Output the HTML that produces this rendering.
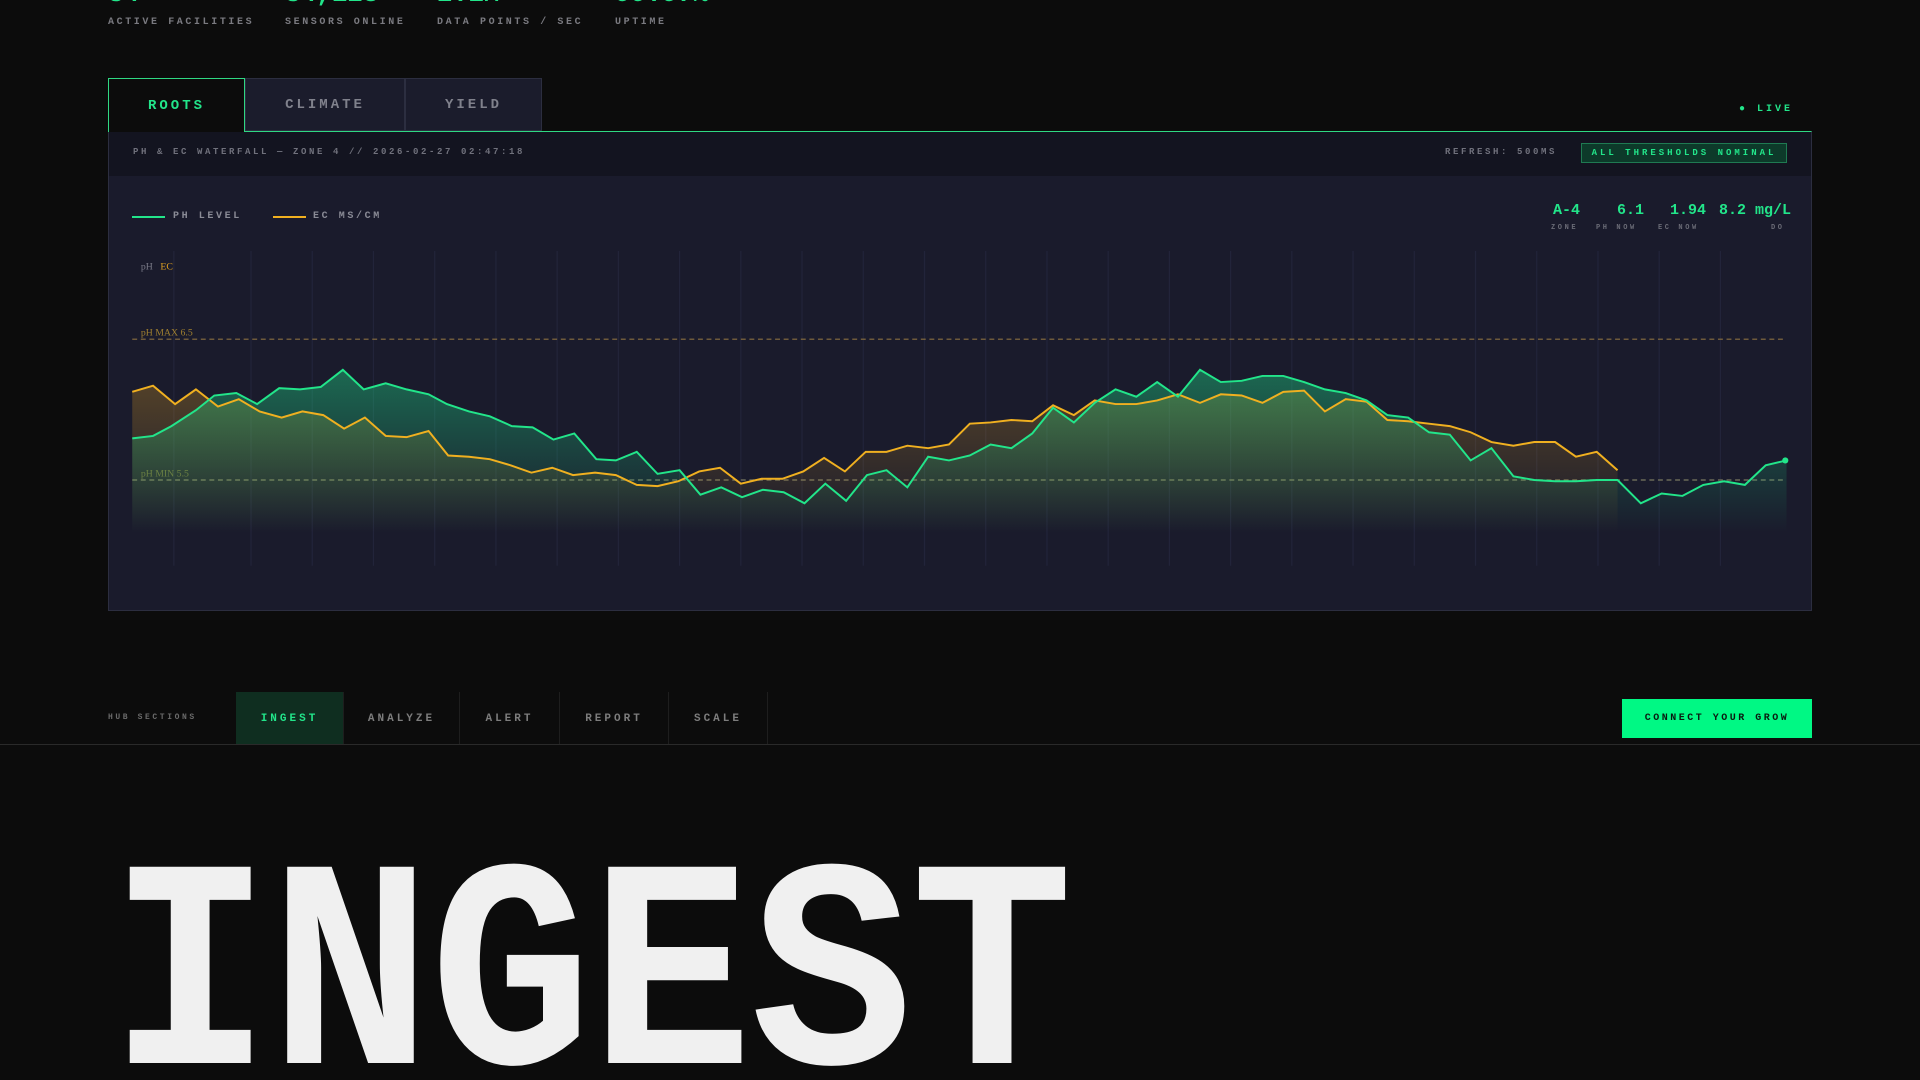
<!DOCTYPE html>
<html><head><meta charset="utf-8"><style>
*{margin:0;padding:0;box-sizing:border-box}
html,body{width:1920px;height:1080px;overflow:hidden}
body{background:#0c0c0c;position:relative;font-family:"Liberation Mono",monospace;}
.a{position:absolute;white-space:nowrap}
.lbl{font-size:10px;letter-spacing:2.6px;color:#7a7a80;font-weight:bold}
.num{font-size:26px;color:#22e58a;font-weight:bold}
.tab{position:absolute;top:78px;height:53px;border:1px solid #2c2e40;background:#1b1c2c;color:#80818c;font-size:14px;font-weight:bold;letter-spacing:3px;display:flex;align-items:center;justify-content:center}
.nav{position:absolute;top:692px;height:53px;display:flex;align-items:center;justify-content:center;font-size:11px;letter-spacing:3px;color:#7d7d7d;font-weight:bold;border-right:1px solid #1e1e1e}
</style></head><body>
<div class="a num" style="left:108px;top:-21px">34</div>
<div class="a num" style="left:285px;top:-21px">34,128</div>
<div class="a num" style="left:437px;top:-21px">2.1M</div>
<div class="a num" style="left:615px;top:-21px">99.97%</div>
<div class="a lbl" style="left:108px;top:17px">ACTIVE FACILITIES</div>
<div class="a lbl" style="left:285px;top:17px">SENSORS ONLINE</div>
<div class="a lbl" style="left:437px;top:17px">DATA POINTS / SEC</div>
<div class="a lbl" style="left:615px;top:17px">UPTIME</div>

<div class="tab" style="left:108px;width:137px;background:#0c0c0c;border-color:#2fd883;border-bottom:none;color:#22e58a;height:54px;z-index:2">ROOTS</div>
<div class="tab" style="left:245px;width:160px">CLIMATE</div>
<div class="tab" style="left:405px;width:137px">YIELD</div>
<div class="a" style="left:1739px;top:104px;font-size:10px;letter-spacing:3px;color:#22e58a;font-weight:bold">● LIVE</div>

<div class="a" style="left:108px;top:131px;width:1704px;height:480px;background:#1a1b2c;border:1px solid #2c2e40;border-top:1px solid #2fd883"></div>
<div class="a" style="left:109px;top:132px;width:1702px;height:44px;background:#131420"></div>
<div class="a lbl" style="left:133px;top:147px;font-size:9px;color:#70717c">PH &amp; EC WATERFALL — ZONE 4 // 2026-02-27 02:47:18</div>
<div class="a lbl" style="left:1445px;top:147px;font-size:9px;color:#70717c">REFRESH: 500MS</div>
<div class="a" style="left:1581px;top:143px;width:206px;height:20px;background:#0d3a2a;border:1px solid #1f7a52;color:#22e58a;font-size:9px;letter-spacing:3px;font-weight:bold;display:flex;align-items:center;justify-content:center">ALL THRESHOLDS NOMINAL</div>

<div class="a" style="left:132px;top:216px;width:33px;height:2px;background:#22e58a"></div>
<div class="a lbl" style="left:173px;top:211px;color:#8a8b96">PH LEVEL</div>
<div class="a" style="left:273px;top:216px;width:33px;height:2px;background:#f0b020"></div>
<div class="a lbl" style="left:313px;top:211px;color:#8a8b96">EC MS/CM</div>

<div class="a" style="left:1553px;top:202px;font-size:15px;font-weight:bold;color:#22e58a">A-4</div>
<div class="a" style="left:1617px;top:202px;font-size:15px;font-weight:bold;color:#22e58a">6.1</div>
<div class="a" style="left:1670px;top:202px;font-size:15px;font-weight:bold;color:#22e58a">1.94</div>
<div class="a" style="left:1719px;top:202px;font-size:15px;font-weight:bold;color:#22e58a">8.2 mg/L</div>
<div class="a lbl" style="left:1551px;top:224px;font-size:7px;color:#6a6b76">ZONE</div>
<div class="a lbl" style="left:1596px;top:224px;font-size:7px;color:#6a6b76">PH NOW</div>
<div class="a lbl" style="left:1658px;top:224px;font-size:7px;color:#6a6b76">EC NOW</div>
<div class="a lbl" style="left:1771px;top:224px;font-size:7px;color:#6a6b76">DO</div>

<svg class="a" style="left:0;top:0" width="1920" height="1080" viewBox="0 0 1568 882">
<defs>
<linearGradient id="gg" gradientUnits="userSpaceOnUse" x1="0" y1="300" x2="0" y2="435"><stop offset="0" stop-color="#1ee08a" stop-opacity=".4"/><stop offset="1" stop-color="#1ee08a" stop-opacity="0"/></linearGradient>
<linearGradient id="yg" gradientUnits="userSpaceOnUse" x1="0" y1="315" x2="0" y2="435"><stop offset="0" stop-color="#e0a020" stop-opacity=".28"/><stop offset="1" stop-color="#e0a020" stop-opacity="0"/></linearGradient>
</defs>
<g stroke="#22243a" stroke-width="1">
<path d="M142 205V462M205 205V462M255 205V462M305 205V462M355 205V462M405 205V462M455 205V462M505 205V462M555 205V462M605 205V462M655 205V462M705 205V462M755 205V462M805 205V462M855 205V462M905 205V462M955 205V462M1005 205V462M1055 205V462M1105 205V462M1155 205V462M1205 205V462M1255 205V462M1305 205V462M1355 205V462M1405 205V462"/>
</g>
<text x="115" y="220" font-family="Liberation Serif" font-size="8" fill="#7a7a88">pH</text>
<text x="131" y="220" font-family="Liberation Serif" font-size="8" fill="#e0a020">EC</text>
<text x="115" y="274" font-family="Liberation Serif" font-size="8" fill="#a08030">pH MAX 6.5</text>
<text x="115" y="389" font-family="Liberation Serif" font-size="8" fill="#6a6a3a">pH MIN 5.5</text>
<path d="M108 277H1459" stroke="#8a7040" stroke-dasharray="4 3" stroke-width="1"/>
<path d="M108 392H1459" stroke="#6a6a58" stroke-dasharray="4 3" stroke-width="1.2"/>
<path fill="url(#yg)" d="M108,320L125,315L143,330L160,318L178,332L195,326L212,336L230,341L247,336L264,339L281,350L298,341L315,356L332,357L350,352L366,372L383,373L400,375L417,380L434,386L451,382L468,388L486,386L503,388L520,396L537,397L554,393L571,385L588,382L605,395L622,391L639,391L656,385L673,374L690,385L707,369L724,369L741,364L758,366L775,363L792,346L809,345L826,343L843,344L860,331L877,339L894,327L911,330L928,330L945,327L962,322L980,329L997,322L1014,323L1031,329L1048,320L1065,319L1082,336L1099,326L1116,328L1133,343L1150,344L1167,346L1184,348L1201,353L1218,361L1236,364L1253,361L1270,361L1287,373L1304,369L1321,384L1321,435L108,435Z"/>
<path fill="url(#gg)" d="M108,358L125,356L140,348L160,335L175,323L193,321L210,330L228,317L245,318L262,316L280,302L297,318L315,313L332,318L350,322L365,330L383,336L400,340L418,348L435,349L452,359L469,354L487,375L503,376L520,369L537,387L555,384L572,404L589,398L606,406L623,400L640,402L657,411L674,395L691,409L708,388L724,384L741,398L758,373L775,376L792,372L809,363L826,366L843,354L860,333L877,345L894,329L911,318L928,324L945,312L962,324L980,302L997,312L1014,311L1031,307L1048,307L1065,312L1082,318L1099,321L1116,327L1133,339L1150,341L1167,353L1184,355L1201,376L1218,366L1236,389L1253,392L1270,393L1287,393L1304,392L1321,392L1340,411L1357,403L1374,405L1391,396L1408,393L1425,396L1442,380L1459,376L1459,435L108,435Z"/>
<path fill="none" stroke="#f0b020" stroke-width="1.6" d="M108,320L125,315L143,330L160,318L178,332L195,326L212,336L230,341L247,336L264,339L281,350L298,341L315,356L332,357L350,352L366,372L383,373L400,375L417,380L434,386L451,382L468,388L486,386L503,388L520,396L537,397L554,393L571,385L588,382L605,395L622,391L639,391L656,385L673,374L690,385L707,369L724,369L741,364L758,366L775,363L792,346L809,345L826,343L843,344L860,331L877,339L894,327L911,330L928,330L945,327L962,322L980,329L997,322L1014,323L1031,329L1048,320L1065,319L1082,336L1099,326L1116,328L1133,343L1150,344L1167,346L1184,348L1201,353L1218,361L1236,364L1253,361L1270,361L1287,373L1304,369L1321,384"/>
<path fill="none" stroke="#22e58a" stroke-width="1.6" d="M108,358L125,356L140,348L160,335L175,323L193,321L210,330L228,317L245,318L262,316L280,302L297,318L315,313L332,318L350,322L365,330L383,336L400,340L418,348L435,349L452,359L469,354L487,375L503,376L520,369L537,387L555,384L572,404L589,398L606,406L623,400L640,402L657,411L674,395L691,409L708,388L724,384L741,398L758,373L775,376L792,372L809,363L826,366L843,354L860,333L877,345L894,329L911,318L928,324L945,312L962,324L980,302L997,312L1014,311L1031,307L1048,307L1065,312L1082,318L1099,321L1116,327L1133,339L1150,341L1167,353L1184,355L1201,376L1218,366L1236,389L1253,392L1270,393L1287,393L1304,392L1321,392L1340,411L1357,403L1374,405L1391,396L1408,393L1425,396L1442,380L1459,376"/>
<circle cx="1458" cy="376" r="2.5" fill="#22e58a"/>
</svg>

<div class="a lbl" style="left:108px;top:713px;font-size:8px;color:#6a6a6a">HUB SECTIONS</div>
<div class="nav" style="left:236px;width:108px;background:#0f2e20;color:#22e58a">INGEST</div>
<div class="nav" style="left:344px;width:116px">ANALYZE</div>
<div class="nav" style="left:460px;width:100px">ALERT</div>
<div class="nav" style="left:560px;width:109px">REPORT</div>
<div class="nav" style="left:669px;width:99px">SCALE</div>
<div class="a" style="left:1622px;top:699px;width:190px;height:39px;background:#00f884;color:#0a1a10;font-size:10px;letter-spacing:2.5px;font-weight:bold;display:flex;align-items:center;justify-content:center">CONNECT YOUR GROW</div>
<div class="a" style="left:0;top:744px;width:1920px;height:1px;background:#2a2a2a"></div>

<div class="a" style="left:109px;top:836px;font-size:298px;line-height:1;font-weight:bold;color:#f0f0f0;transform:scaleX(0.907);transform-origin:left top;letter-spacing:-2px">INGEST</div>
</body></html>
